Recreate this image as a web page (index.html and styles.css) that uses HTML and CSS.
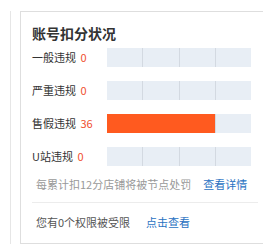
FILE: index.html
```html
<!DOCTYPE html>
<html>
<head>
<meta charset="utf-8">
<link rel="stylesheet" href="styles.css">
</head>
<body>
<div class="page">
  <div class="side"></div>
  <div class="card">
    <div class="title">账号扣分状况</div>
    <div class="rows">
      <div class="row">
        <div class="label">一般违规 <span class="num">0</span></div>
        <div class="bar"><i></i><i></i><i></i><i></i></div>
      </div>
      <div class="row">
        <div class="label">严重违规 <span class="num">0</span></div>
        <div class="bar"><i></i><i></i><i></i><i></i></div>
      </div>
      <div class="row">
        <div class="label">售假违规 <span class="num">36</span></div>
        <div class="bar"><i></i><i></i><i></i><i></i><b class="fill" style="width:75%"></b></div>
      </div>
      <div class="row">
        <div class="label">U站违规 <span class="num">0</span></div>
        <div class="bar"><i></i><i></i><i></i><i></i></div>
      </div>
    </div>
    <div class="note">每累计扣12分店铺将被节点处罚<a class="link">查看详情</a></div>
    <div class="footer">您有0个权限被受限<a class="link link2">点击查看</a></div>
  </div>
</div>
</body>
</html>
```
FILE: styles.css
```css
html, body {
  margin: 0;
  padding: 0;
  background: #fff;
  overflow: hidden;
}
body {
  font-family: "Noto Sans CJK SC", "Microsoft YaHei", sans-serif;
  color: #333;
  font-size: 11px;
}
.page {
  display: flex;
  padding-top: 11px;
  width: 263px;
  overflow: hidden;
}
.side {
  width: 10px;
  height: 233px;
  border-right: 1px solid #e6e6e6;
  margin-right: 9px;
  flex: none;
}
.card {
  flex: none;
  width: 226px;
  height: 220px;
  border: 1px solid #dedede;
  padding: 11px 11px 0 11px;
}
.title {
  font-size: 14px;
  font-weight: bold;
  line-height: 20px;
  color: #333;
}
.rows {
  margin-top: 5px;
  display: flex;
  flex-direction: column;
  gap: 14px;
}
.row {
  display: flex;
  align-items: center;
  height: 19px;
}
.label {
  width: 75px;
  line-height: 19px;
  color: #333;
  white-space: nowrap;
}
.num {
  color: #f0502f;
  margin-left: 2px;
}
.bar {
  position: relative;
  width: 144px;
  height: 19px;
  background: #e8eef5;
  display: flex;
}
.bar i {
  flex: 1;
  border-left: 1px solid #d3d9e1;
}
.bar i:first-child {
  border-left: none;
}
.fill {
  position: absolute;
  left: 0;
  top: 0;
  bottom: 0;
  background: #ff5a1f;
}
.note {
  margin-top: 8px;
  padding-left: 4px;
  padding-bottom: 8px;
  border-bottom: 1px solid #ececec;
  line-height: 20px;
  color: #999;
  white-space: nowrap;
}
.link {
  color: #2a72c2;
  margin-left: 12px;
}
.footer {
  padding-top: 9px;
  padding-left: 4px;
  line-height: 20px;
  color: #555;
  white-space: nowrap;
}
.link2 {
  margin-left: 16px;
}
```
